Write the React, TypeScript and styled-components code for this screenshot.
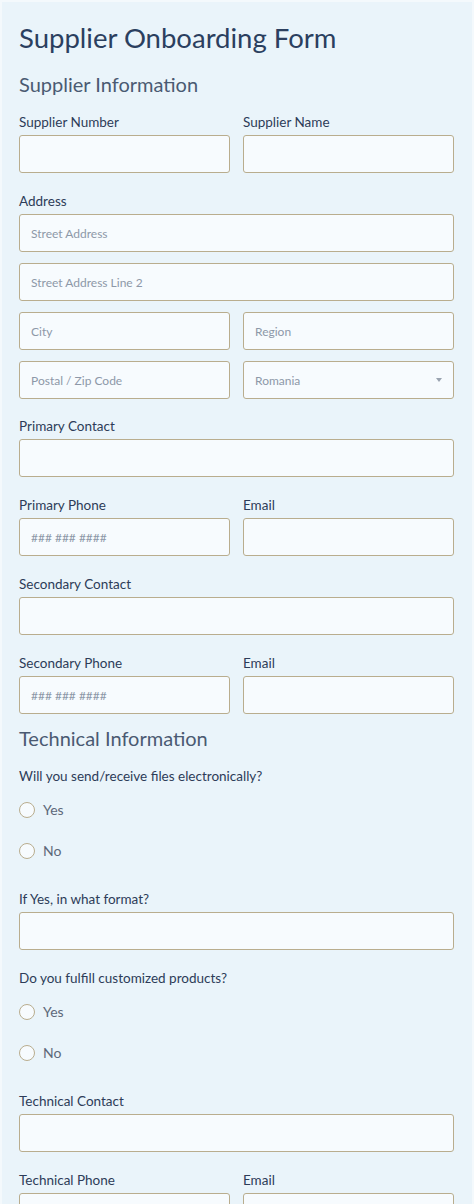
import React from "react";
import styled, { createGlobalStyle } from "styled-components";

const Global = createGlobalStyle`
  html, body { margin: 0; padding: 0; background: #f4f9fc; }
  body { font-family: "Lato", "Open Sans", sans-serif; }
  * { box-sizing: border-box; }
`;

const Card = styled.div`
  margin: 2px 2px 0;
  background: #eaf4fa;
  padding: 20px 18px 40px 17px;
  min-height: 1202px;
`;

const Title = styled.h1`
  margin: 0 0 17px;
  font-size: 27.5px;
  line-height: 32px;
  font-weight: 400;
  color: #2b3f5f;
`;

const Section = styled.h2<{ $pull?: number }>`
  margin: ${(p) => (p.$pull ? `-${p.$pull}px` : "0")} 0 16px;
  font-size: 20px;
  line-height: 26px;
  font-weight: 400;
  color: #4a5a72;
`;

const Row = styled.div`
  display: grid;
  grid-template-columns: 1fr 1fr;
  column-gap: 13px;
`;

const Field = styled.div<{ $after?: number }>`
  display: flex;
  flex-direction: column;
  margin-bottom: ${(p) => p.$after ?? 19}px;
`;

const Label = styled.label`
  font-size: 13.5px;
  line-height: 18px;
  color: #2d3c58;
  margin-bottom: 4px;
`;

const Stack = styled.div`
  display: flex;
  flex-direction: column;
  gap: 11px;
`;

const Input = styled.input`
  width: 100%;
  height: 38px;
  border: 1px solid #b9ad8e;
  border-radius: 3px;
  background: #f7fbfe;
  padding: 0 11px;
  font-family: inherit;
  font-size: 12px;
  color: #2d3c58;
  outline: none;
  &::placeholder { color: #8d98a8; }
`;

const SelectBox = styled.div`
  height: 38px;
  border: 1px solid #b9ad8e;
  border-radius: 3px;
  background: #f7fbfe;
  padding: 0 11px;
  display: flex;
  align-items: center;
  justify-content: space-between;
  font-size: 12px;
  color: #8d98a8;
`;

const Caret = styled.span`
  width: 0;
  height: 0;
  border-left: 3.5px solid transparent;
  border-right: 3.5px solid transparent;
  border-top: 4px solid #9aa3b0;
`;

const RadioGroup = styled.div`
  display: flex;
  flex-direction: column;
`;

const RadioRow = styled.div`
  height: 41px;
  display: flex;
  align-items: center;
  gap: 8px;
  font-size: 14px;
  color: #5d6879;
`;

const Circle = styled.span`
  width: 16px;
  height: 16px;
  border-radius: 50%;
  border: 1px solid #b9ad8e;
  background: #f7fbfe;
`;

const TextField = ({ label, placeholder }: { label?: string; placeholder?: string }) => (
  <Field>
    {label && <Label>{label}</Label>}
    <Input placeholder={placeholder} />
  </Field>
);

const Radios = ({ label }: { label: string }) => (
  <Field>
    <Label>{label}</Label>
    <RadioGroup>
      <RadioRow><Circle />Yes</RadioRow>
      <RadioRow><Circle />No</RadioRow>
    </RadioGroup>
  </Field>
);

export default function App() {
  return (
    <>
      <Global />
      <Card>
        <Title>Supplier Onboarding Form</Title>
        <Section>Supplier Information</Section>
        <Row>
          <TextField label="Supplier Number" />
          <TextField label="Supplier Name" />
        </Row>
        <Field $after={18}>
          <Label>Address</Label>
          <Stack>
            <Input placeholder="Street Address" />
            <Input placeholder="Street Address Line 2" />
            <Row>
              <Input placeholder="City" />
              <Input placeholder="Region" />
            </Row>
            <Row>
              <Input placeholder="Postal / Zip Code" />
              <SelectBox>
                <span>Romania</span>
                <Caret />
              </SelectBox>
            </Row>
          </Stack>
        </Field>
        <TextField label="Primary Contact" />
        <Row>
          <TextField label="Primary Phone" placeholder="### ### ####" />
          <TextField label="Email" />
        </Row>
        <TextField label="Secondary Contact" />
        <Row>
          <TextField label="Secondary Phone" placeholder="### ### ####" />
          <TextField label="Email" />
        </Row>
        <Section $pull={8}>Technical Information</Section>
        <Radios label="Will you send/receive files electronically?" />
        <TextField label="If Yes, in what format?" />
        <Radios label="Do you fulfill customized products?" />
        <TextField label="Technical Contact" />
        <Row>
          <TextField label="Technical Phone" />
          <TextField label="Email" />
        </Row>
      </Card>
    </>
  );
}
